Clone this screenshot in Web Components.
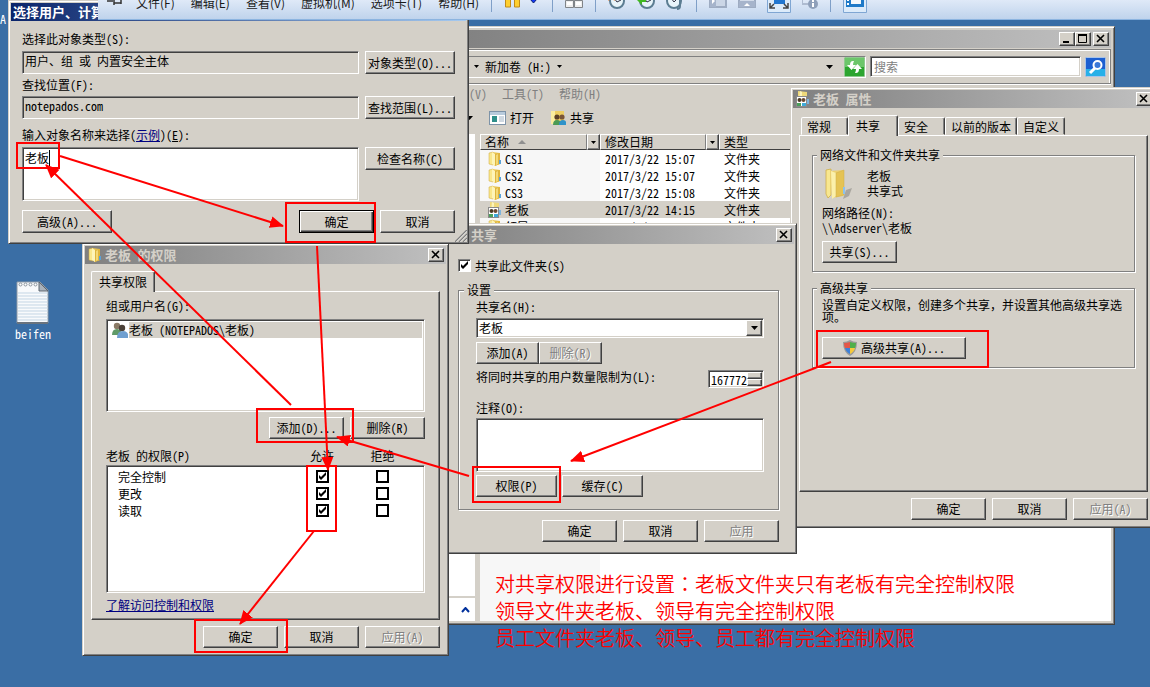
<!DOCTYPE html>
<html lang="zh-CN">
<head>
<meta charset="utf-8">
<title>共享权限设置</title>
<style>
html, body { margin: 0; height: 100%; }
body { font: 12px/14px "Noto Sans Mono CJK SC", "Liberation Mono", "Noto Sans CJK SC", monospace; color: #000; background: #3a6ea5; overflow: hidden; }
</style>
</head>
<body>
<lab-desktop></lab-desktop>
<script>
const base = `
*, *::before, *::after { box-sizing: border-box; }
:host { display: block; box-sizing: border-box; }
[hidden] { display: none !important; }
p, h2 { margin: 0; }
input, textarea, select, button { font: inherit; color: inherit; margin: 0; border-radius: 0; outline: 0; }
.sunken { border: 1px solid; border-color: #808080 #fff #fff #808080; box-shadow: inset 1px 1px #404040, inset -1px -1px #d4d0c8; background: #fff; padding: 2px; display: block; width: 100%; resize: none; overflow: hidden; }
.raised { border: 1px solid; border-color: #fff #404040 #404040 #fff; box-shadow: inset -1px -1px #808080; background: #d4d0c8; }
.actions { display: flex; justify-content: flex-end; gap: 6px; }
.actions win-button { width: 75px; }
a { color: #000080; }
input[type=checkbox] { appearance: none; width: 13px; height: 13px; flex: none; background: #fff no-repeat center; }
input[type=checkbox]:checked { background-image: url("data:image/svg+xml,%3Csvg xmlns='http://www.w3.org/2000/svg' width='9' height='9'%3E%3Cpath d='M1 3v3l2 2 5-5V0L3 5z'/%3E%3C/svg%3E"); }
`;
function define(name, css, html, ready) {
  const t = document.createElement('template');
  t.innerHTML = `<style>${base}${css}</style>${html}`;
  customElements.define(name, class extends HTMLElement {
    connectedCallback() {
      if (this.shadowRoot) return;
      this.attachShadow({ mode: 'open' }).append(t.content.cloneNode(true));
      if (ready) ready(this, this.shadowRoot);
    }
  });
}

/* ---- icons ---- */
const icons = {
  folder: [16, 16, `<path d="M2 2l4-1v13l-4-1z" fill="#f9e78c" stroke="#cda63a" stroke-width=".5"/><path d="M5 1l8 1v11l-6 2z" fill="#e9c552"/><path d="M5 1l3 2v12l-3-2z" fill="#fdf4b8"/><path d="M8 3l5-1v11l-5 2z" fill="#dfb53e"/><path d="M9 4l2-1v10l-2 1z" fill="#f3d976"/><path d="M12 9h2v4h-2z" fill="#5aa2d8"/>`],
  shared: [16, 16, `<path d="M3 0l9 1v12H3z" fill="#efd97a"/><path d="M5 0l2 1v8H4z" fill="#fdf4b8"/><path d="M12 8h2v5h-2z" fill="#7db4dd"/><rect x="1.5" y="5.500" width="10" height="10" fill="#fff" stroke="#8a8a8a"/><circle cx="4.500" cy="9" r="2" fill="#4c3a26"/><circle cx="8.500" cy="9" r="2" fill="#6b4a30"/><path d="M2 15v-3h4v3z" fill="#4ba05a"/><path d="M7 15v-3h4v3z" fill="#3fa9d8"/>`],
  big: [30, 32, `<path d="M20 31l6-3 3-8-6 2z" fill="#000" opacity=".2"/><path d="M3 2l5-1v26l-3 3-2-4z" fill="#f8e78f" stroke="#cfae48" stroke-width=".8"/><path d="M7 3l13-1v26L9 30z" fill="#ecd072"/><path d="M8 3l5 2v23l-4 3z" fill="#fbf0ab"/><path d="M13 5l8-3v25l-8 2z" fill="#e5c353" stroke="#cfae48" stroke-width=".5"/><path d="M20 19h2v7h-2z" fill="#8cc2ee"/>`],
  share: [16, 16, `<path d="M1 1h13v13H1z" fill="#eece62"/><path d="M1 1h4v13H1z" fill="#fbeda0"/><circle cx="7" cy="7" r="2.600" fill="#5a3f28"/><circle cx="12" cy="7" r="2.600" fill="#7a5537"/><path d="M3 15q0-5 4-5t4 5z" fill="#4c9a55"/><path d="M9 15q0-5 4-5t3 5z" fill="#2f93c9"/>`],
  open: [17, 14, `<rect x=".5" y=".5" width="16" height="13" fill="#fff" stroke="#7d93a8"/><path d="M1 1h15v3H1z" fill="#b8cbdc"/><path d="M3 5h5v6H3z" fill="#2f8f8a"/><path d="M10 6h5M10 8h5M10 10h5" stroke="#9fb2c4"/>`],
  users: [16, 16, `<circle cx="5" cy="4" r="3.200" fill="#8a7a66"/><path d="M0 13q0-6 5-6t5 6z" fill="#5f9a68"/><circle cx="10" cy="6" r="3.200" fill="#4a4038"/><path d="M5 16q0-7 6-7t5 7z" fill="#6f9fd0"/>`],
  shield: [14, 16, `<path d="M7 0q3 2 7 2 0 10-7 14Q0 12 0 2q4 0 7-2z" fill="#9a9a9a"/><path d="M7 2v6H2Q1 6 1 3q3 0 6-1z" fill="#e2574a"/><path d="M7 2v6h5q1-2 1-5-3 0-6-1z" fill="#4faf4a"/><path d="M2 8h5v6Q3 12 2 8z" fill="#3d80d8"/><path d="M12 8H7v6q4-2 5-6z" fill="#f5c93c"/>`],
  down: [7, 4, `<path d="M0 0h7L3.500 4z"/>`],
  small: [5, 3, `<path d="M0 0h5L2.500 3z"/>`],
  up: [8, 4, `<path d="M0 4h8L4 0z" fill="#909090"/>`],
  close: [16, 14, `<path d="M4 3l7 7M11 3l-7 7" stroke="#000" stroke-width="1.600"/>`],
  min: [16, 14, `<path d="M4 9h6v2H4z"/>`],
  max: [16, 14, `<path d="M3.500 2.500h8v8h-8z" fill="none" stroke="#000"/><path d="M3 2h9v2H3z"/>`],
  refresh: [21, 20, `<rect x=".5" y=".5" width="20" height="19" rx="1" fill="#2ca52f" stroke="#8fc98f"/><path d="M1 1h19v9H1z" fill="#6cc66a"/><path d="M9 4Q6 4 6 8H3l4.500 5L12 8H9q0-2 1-4zM12 16q3 0 3-4h3l-4.500-5L9 12h3q0 2-1 4z" fill="#fff"/>`],
  search: [21, 20, `<rect x=".5" y=".5" width="20" height="19" rx="1" fill="#1c5fd0" stroke="#a8c4e8"/><path d="M1 12h19v7H1z" fill="#27b0e8"/><circle cx="12.500" cy="8" r="4" fill="#3a78d8" stroke="#fff" stroke-width="2"/><path d="M10 11l-5 5" stroke="#fff" stroke-width="3"/>`],
  grip: [12, 12, `<path d="M0 12L12 0M4 12l8-8M8 12l4-4" stroke="#808080" stroke-width="1.500"/><path d="M1 12L12 1M5 12l7-7M9 12l3-3" stroke="#fff" stroke-width=".5"/>`],
  chevron: [9, 6, `<path d="M1 5l3.500-4L8 5" fill="none" stroke="#00309c" stroke-width="2"/>`],
  notes: [34, 44, `<path d="M1 1h23l8 8v33H1z" fill="#f8fafc" stroke="#8c98a4"/><path d="M1 41h31v2H1z" fill="#69737d"/><path d="M2 12h30M2 15h30M2 18h30M2 21h30M2 24h30M2 27h30M2 30h30M2 33h30M2 36h30M2 39h30" stroke="#c3d5e4"/><path d="M23 1l9 9h-9z" fill="#a9b2bb" stroke="#5d6670"/><g fill="#fff" stroke="#8a949e"><circle cx="4.500" cy="3.500" r="1.500"/><circle cx="9.500" cy="3.500" r="1.500"/><circle cx="14.500" cy="3.500" r="1.500"/><circle cx="19.500" cy="3.500" r="1.500"/></g>`],
  pin: [16, 24, `<path d="M0 12h6M7 7v9M7 9h7v5H7M14 7v8" fill="none" stroke="#333" stroke-width="1.500"/>`],
  pause: [36, 24, `<path d="M1.500 0h5v18h-5zM10.500 0h5v18h-5z" fill="#ffcf2e" stroke="#c08a18"/><path d="M26 10h7l-3.500 4z" fill="#1238f8" stroke="#0b1f6b"/>`],
  keys: [18, 24, `<path d="M5 5h8v6H5zM.5 11.500h8v7h-8zM9.500 11.500h8v7h-8z" fill="#eee" stroke="#808488"/><path d="M2 13h5v3H2zM11 13h5v3h-5z" fill="#fff"/>`],
  clock1: [18, 24, `<circle cx="9" cy="12" r="7" fill="#e8f4fa" stroke="#5c7d92" stroke-width="2"/><path d="M6 9l3 4 4-2" fill="none" stroke="#334"/><path d="M0 11l4-3 3 3" stroke="#f07820" stroke-width="2" fill="none"/>`],
  clock2: [18, 24, `<circle cx="10" cy="12" r="7" fill="#e8f4fa" stroke="#5c7d92" stroke-width="2"/><path d="M7 9l3 4 4-2" fill="none" stroke="#334"/><path d="M0 11l5-4v3h4v3H5v3z" fill="#40b820"/>`],
  clock3: [18, 24, `<circle cx="8" cy="12" r="7" fill="#e8f4fa" stroke="#5c7d92" stroke-width="2"/><path d="M5 9l3 4 3-3" fill="none" stroke="#334"/><path d="M17 9q-3 0-3 3v5q0 3-3 3" fill="none" stroke="#5c7d92" stroke-width="2"/>`],
  side: [18, 24, `<path d="M1 3h16v15H1z" fill="#cbd6e6" stroke="#9eacc2" stroke-width="2"/><path d="M1 3h6v15H1z" fill="#a6b4cb"/><path d="M3 9l3 3-3 3z" fill="#fff"/>`],
  bottom: [18, 24, `<path d="M1 3h16v15H1z" fill="#d3dcea" stroke="#9eacc2" stroke-width="2"/><path d="M1 12h16v6H1z" fill="#a6b4cb"/><path d="M6 17l3-3 3 3z" fill="#fff"/>`],
  full: [24, 24, `<path d="M.5 0v23.500h23V0z" fill="#dcebfa" stroke="#7fa6d3"/><path d="M7 3h11v12H7z" fill="#2176d0"/><path d="M3 14v5h5M21 14v5h-5M3 19l4-4M21 19l-4-4" fill="none" stroke="#444" stroke-width="1.500"/>`],
  info: [16, 24, `<path d="M0 3h10v12H0z" fill="none" stroke="#aebbd0" stroke-width="2"/><circle cx="11" cy="15" r="5" fill="#8fa0ba"/><path d="M11 14v4M11 11v2" stroke="#fff" stroke-width="2"/>`],
  unity: [24, 24, `<path d="M.5 0v23.500h23V0z" fill="#dcebfa" stroke="#7fa6d3"/><path d="M3 3h18v15H3z" fill="#1f7ac8"/><path d="M8 6h10v9H8z" fill="#f4f8fc"/><path d="M4 6h2v2H4zM4 10h2v2H4zM4 14h2v2H4z" fill="#fff"/>`]
};
customElements.define('ui-icon', class extends HTMLElement {
  connectedCallback() {
    if (this.shadowRoot) return;
    const [w, h, body] = icons[this.getAttribute('name')];
    this.attachShadow({ mode: 'open' }).innerHTML =
      `<style>:host{display:inline-block;flex:none;line-height:0}svg{display:block}</style><svg width="${w}" height="${h}" viewBox="0 0 ${w} ${h}" aria-hidden="true">${body}</svg>`;
  }
});

/* ---- basic controls ---- */
define('win-button', `
:host { height: 22px; flex: none; }
button { width: 100%; height: 100%; padding: 0 2px; display: flex; align-items: center; justify-content: center; gap: 4px; white-space: nowrap; }
:host([default]) button { border-color: #000; box-shadow: inset 1px 1px #fff, inset -1px -1px #404040, inset -2px -2px #808080; }
button:disabled { color: #808080; text-shadow: 1px 1px #fff; }
`, `<button type="button" class="raised"><slot></slot></button>`, (el, root) => {
  root.querySelector('button').disabled = el.hasAttribute('disabled');
});

define('win-frame', `
:host { background: #d4d0c8; border: 1px solid; border-color: #d4d0c8 #404040 #404040 #d4d0c8; box-shadow: inset 1px 1px #fff, inset -1px -1px #808080; padding: 2px; position: relative; display: flex; flex-direction: column; }
header { height: 18px; flex: none; display: flex; align-items: center; gap: 2px; padding: 0 2px; background: linear-gradient(90deg, #808080, #c0c0c0); color: #d4d0c8; }
:host([active]) header { background: linear-gradient(90deg, #0a246a, #a6caf0); color: #fff; }
h2 { font-size: 13px; line-height: 18px; font-weight: bold; flex: 1; white-space: nowrap; min-width: 0; }
button { width: 16px; height: 14px; padding: 0; overflow: hidden; line-height: 0; }
button ui-icon { margin: -1px; }
.sizes { display: flex; }
.body { flex: 1; min-height: 0; display: flex; flex-direction: column; }
`, `<header><slot name="icon"></slot><h2></h2><span class="sizes" hidden><button class="raised" aria-label="最小化"><ui-icon name="min"></ui-icon></button><button class="raised" aria-label="最大化"><ui-icon name="max"></ui-icon></button></span><button class="raised shut" aria-label="关闭"><ui-icon name="close"></ui-icon></button></header><div class="body"><slot></slot></div>`, (el, root) => {
  root.querySelector('h2').textContent = el.getAttribute('heading') || '';
  root.querySelector('.sizes').hidden = !el.hasAttribute('sizable');
  root.querySelector('.shut').hidden = el.hasAttribute('active');
});

define('group-box', `
fieldset { margin: 0; min-width: 0; border: 1px solid #808080; box-shadow: 1px 1px #fff, inset 1px 1px #fff; padding: var(--pad, 4px 9px 8px); }
legend { padding: 0 3px; margin-left: -5px; background: #d4d0c8; line-height: 14px; }
:host([wide]) legend { margin-left: -12px; }
`, `<fieldset><legend></legend><slot></slot></fieldset>`, (el, root) => {
  root.querySelector('legend').textContent = el.getAttribute('legend');
});

define('tab-box', `
:host { padding: 7px 6px 5px; display: flex; flex-direction: column; gap: 6px; }
nav { display: flex; align-items: flex-end; height: 20px; position: relative; z-index: 1; }
button { height: 18px; padding: 0 5px; border: 1px solid; border-color: #fff #404040 transparent #fff; box-shadow: inset -1px 0 #808080; border-radius: 2px 2px 0 0; background: #d4d0c8; white-space: nowrap; line-height: 18px; text-align: left; min-width: 47px; }
button[aria-selected=true] { height: 21px; margin-bottom: -1px; border-bottom: 0; min-width: 50px; padding: 0 7px; }
button[aria-selected=false]:first-child { margin-left: 2px; }
.page { border: 1px solid; border-color: #fff #404040 #404040 #fff; box-shadow: inset -1px -1px #808080; padding: var(--page-pad, 12px 12px 6px); min-height: var(--page-height, 0); }
`, `<div><nav role="tablist"></nav><div class="page" role="tabpanel"><slot></slot></div></div><slot name="actions"></slot>`, (el, root) => {
  const nav = root.querySelector('nav');
  el.getAttribute('tabs').split('|').forEach(t => {
    const b = document.createElement('button');
    b.type = 'button';
    b.setAttribute('role', 'tab');
    b.setAttribute('aria-selected', t === el.getAttribute('current'));
    b.textContent = t;
    nav.append(b);
  });
});

/* ---- host machine toolbar ---- */
define('vm-bar', `
:host { height: 34px; background: linear-gradient(#e6eefa 30%, #bfd3ec); border-bottom: 1px solid #8cb4e0; display: flex; align-items: center; gap: 11px; padding-left: 9px; overflow: hidden; font-family: "Noto Sans CJK SC", sans-serif; color: #1a1a1a; }
nav { display: flex; gap: 16px; margin-left: 2px; flex: none; }
button { border: 0; padding: 0; background: none; flex: none; line-height: 16px; }
i { width: 1px; height: 18px; background: #7f9fc8; margin: 0 1px; flex: none; }
`, `<button aria-label="固定"><ui-icon name="pin"></ui-icon></button>
<nav><button>文件(F)</button><button>编辑(E)</button><button>查看(V)</button><button>虚拟机(M)</button><button>选项卡(T)</button><button>帮助(H)</button></nav>
<i></i><button aria-label="暂停"><ui-icon name="pause"></ui-icon></button><i></i>
<button aria-label="发送按键"><ui-icon name="keys"></ui-icon></button><i></i>
<button aria-label="拍摄快照"><ui-icon name="clock1"></ui-icon></button><button aria-label="恢复快照"><ui-icon name="clock2"></ui-icon></button><button aria-label="管理快照"><ui-icon name="clock3"></ui-icon></button><i></i>
<button aria-label="侧栏"><ui-icon name="side"></ui-icon></button><button aria-label="缩略图栏"><ui-icon name="bottom"></ui-icon></button><button aria-label="全屏"><ui-icon name="full"></ui-icon></button><button aria-label="信息"><ui-icon name="info"></ui-icon></button><i></i>
<button aria-label="控制台视图"><ui-icon name="unity"></ui-icon></button>`);

/* ---- file explorer ---- */
const files = [['folder', 'CS1', '2017/3/22 15:07'], ['folder', 'CS2', '2017/3/22 15:07'], ['folder', 'CS3', '2017/3/22 15:08'], ['shared', '老板', '2017/3/22 14:15'], ['folder', '领导', '2017/3/22 14:15']];
define('explorer-window', `
win-frame { height: 100%; padding: 3px; }
.rebar { margin-top: 1px; border: 1px solid #808080; border-left: 0; box-shadow: inset -1px 1px #fff, 0 1px #fff; height: 35px; display: flex; align-items: center; gap: 4px; padding: 0 4px 0 0; flex: none; }
.address { flex: 1; display: flex; align-items: center; gap: 6px; height: 22px; border: 1px solid; border-color: #808080 #fff #fff #808080; padding-left: 29px; }
.address span { flex: 1; display: flex; align-items: center; gap: 6px; }
.address > ui-icon:nth-of-type(2) { margin-right: 5px; }
.icon { border: 0; padding: 0; background: none; line-height: 0; }
input.sunken { width: 211px; height: 21px; padding: 2px 3px; }
input::placeholder { color: #808080; opacity: 1; }
.menu { display: flex; gap: 15px; padding: 3px 0 0 25px; color: #808080; flex: none; }
.menu button, .tools button { border: 0; padding: 0; background: none; }
.tools { display: flex; gap: 16px; height: 33px; align-items: center; padding-left: 22px; flex: none; }
.tools button { display: flex; align-items: center; gap: 4px; }
.panes { flex: 1; min-height: 0; display: grid; grid-template-columns: 31px 1fr; gap: 5px; }
.tree { display: grid; grid-template-rows: 1fr 23px; gap: 2px; }
.tree div { background: #fff; display: flex; align-items: center; justify-content: flex-end; padding-right: 5px; }
.list { background: linear-gradient(90deg, #f7f7f7 120px, #fff 120px); overflow: hidden; }
table { border-collapse: collapse; width: 100%; table-layout: fixed; }
th { padding: 0; font-weight: normal; text-align: left; height: 16px; }
th div { display: flex; height: 16px; }
th span { flex: 1; border: 1px solid; border-color: #fff #808080 #404040 #fff; background: #d4d0c8; padding-left: 4px; display: flex; align-items: center; gap: 9px; }
th button { width: 13px; padding: 0; display: flex; align-items: center; justify-content: center; }
td { padding: 0 0 0 5px; height: 17px; white-space: nowrap; line-height: 16px; }
td div { display: flex; align-items: center; gap: 2px; margin-left: 2px; }
tr.on { background: #d4d0c8; }
`, `<win-frame heading="" sizable>
<div class="rebar"><div class="address"><ui-icon name="small"></ui-icon><span>新加卷 (H:)<ui-icon name="small"></ui-icon></span><ui-icon name="down"></ui-icon><button class="icon" aria-label="刷新"><ui-icon name="refresh"></ui-icon></button></div>
<input class="sunken" type="text" placeholder="搜索" aria-label="搜索"><button class="icon" aria-label="开始搜索"><ui-icon name="search"></ui-icon></button></div>
<div class="menu"><button>(V)</button><button>工具(T)</button><button>帮助(H)</button></div>
<div class="tools"><ui-icon name="down"></ui-icon><button><ui-icon name="open"></ui-icon>打开</button><button><ui-icon name="share"></ui-icon>共享</button></div>
<div class="panes"><div class="tree"><div></div><div><ui-icon name="chevron"></ui-icon></div></div>
<div class="list"><table><colgroup><col style="width:120px"><col style="width:119px"><col></colgroup>
<thead><tr><th><div><span>名称<ui-icon name="up"></ui-icon></span><button class="raised" aria-label="筛选名称"><ui-icon name="small"></ui-icon></button></div></th><th><div><span>修改日期</span><button class="raised" aria-label="筛选日期"><ui-icon name="small"></ui-icon></button></div></th><th><div><span>类型</span></div></th></tr></thead>
<tbody>${files.map(f => `<tr${f[0] === 'shared' ? ' class="on"' : ''}><td><div><ui-icon name="${f[0]}"></ui-icon>${f[1]}</div></td><td>${f[2]}</td><td>文件夹</td></tr>`).join('')}</tbody></table></div></div>
</win-frame>`);

/* ---- 老板 属性 ---- */
define('properties-dialog', `
tab-box { --page-height: 357px; }
group-box + group-box { margin-top: 9px; }
group-box:first-of-type { --pad: 6px 9px 8px; }
.item { display: flex; gap: 14px; line-height: 15px; padding-left: 1px; margin-bottom: 5px; }
.path { line-height: 15px; margin-bottom: 6px; }
.note { line-height: 12px; margin-bottom: 14px; }
.share { width: 75px; }
.advanced { width: 144px; }
`, `<win-frame heading="老板 属性"><ui-icon slot="icon" name="shared"></ui-icon>
<tab-box tabs="常规|共享|安全|以前的版本|自定义" current="共享">
<group-box legend="网络文件和文件夹共享"><div class="item"><ui-icon name="big"></ui-icon><p>老板<br>共享式</p></div><p class="path">网络路径(N):<br>\\\\Adserver\\老板</p><win-button class="share">共享(S)...</win-button></group-box>
<group-box legend="高级共享"><p class="note">设置自定义权限，创建多个共享，并设置其他高级共享选项。</p><win-button class="advanced"><ui-icon name="shield"></ui-icon>高级共享(A)...</win-button></group-box>
<div class="actions" slot="actions"><win-button>确定</win-button><win-button>取消</win-button><win-button disabled>应用(A)</win-button></div>
</tab-box></win-frame>`);

/* ---- 高级共享 ---- */
define('sharing-dialog', `
form { padding: 14px 15px 9px 12px; display: flex; flex-direction: column; }
.check { display: flex; align-items: center; gap: 4px; height: 15px; margin-bottom: 10px; }
.check input { border: 1px solid; border-color: #808080 #fff #fff #808080; box-shadow: inset 1px 1px #404040; }
group-box { --pad: 3px 14px 12px 17px; margin-bottom: 10px; }
label { display: block; }
.combo { position: relative; margin: 4px 0; }
select.sunken { appearance: none; height: 20px; }
.combo .raised { position: absolute; right: 2px; top: 2px; width: 16px; height: 16px; display: flex; align-items: center; justify-content: center; pointer-events: none; }
.pair { display: flex; }
.pair win-button { width: 63px; }
.limit { display: flex; justify-content: space-between; margin: 6px 0 13px; }
.spin { position: relative; width: 56px; height: 18px; }
.spin .sunken { height: 18px; }
.spin span { position: absolute; right: 2px; top: 2px; width: 15px; display: grid; }
.spin button { height: 7px; padding: 0; }
textarea.sunken { height: 54px; margin: 3px 0; }
.wide { gap: 5px; }
.wide win-button { width: 81px; }
.gap { width: 21px; }
`, `<win-frame heading="共享"><span slot="icon" class="gap"></span>
<form><label class="check"><input type="checkbox" checked>共享此文件夹(S)</label>
<group-box wide legend="设置"><label for="name">共享名(H):</label>
<div class="combo"><select id="name" class="sunken"><option>老板</option></select><span class="raised"><ui-icon name="down"></ui-icon></span></div>
<div class="pair"><win-button>添加(A)</win-button><win-button disabled>删除(R)</win-button></div>
<div class="limit"><label for="max">将同时共享的用户数量限制为(L):</label><div class="spin"><input id="max" class="sunken" type="text" value="167772"><span><button type="button" class="raised" aria-label="增加"></button><button type="button" class="raised" aria-label="减少"></button></span></div></div>
<label for="memo">注释(O):</label><textarea id="memo" class="sunken"></textarea>
<div class="pair wide"><win-button>权限(P)</win-button><win-button>缓存(C)</win-button></div></group-box>
<div class="actions"><win-button>确定</win-button><win-button>取消</win-button><win-button disabled>应用</win-button></div></form>
</win-frame>`);

/* ---- 老板 的权限 ---- */
const rights = [['完全控制', true], ['更改', true], ['读取', true]];
define('permissions-dialog', `
tab-box { --page-pad: 7px 14px 6px; }
.users { height: 93px; margin: 6px 0 5px; padding: 2px; }
.users div { display: flex; align-items: center; height: 16px; background: linear-gradient(90deg, #fff 20px, #d4d0c8 20px); padding-left: 3px; gap: 1px; }
th, td { padding: 0; font-weight: normal; text-align: center; }
th { height: 14px; }
th:first-child { text-align: left; }
td { height: 17px; }
td:first-child { text-align: left; padding-left: 12px; }
th:last-child, td:last-child { padding-right: 12px; }
td input[type=checkbox] { border: 2px solid #000; display: block; margin: 0 auto; }
thead::after { content: ""; display: block; height: 5px; }
.link { display: block; margin-top: 5px; margin-bottom: 1px; width: max-content; }
.box { margin-top: 10px; display: grid; }
.box .sunken, .box table { grid-area: 1 / 1; }
.box .sunken { margin-top: 16px; height: 128px; }
.box table { width: 100%; border-collapse: collapse; table-layout: fixed; align-self: start; position: relative; }
`, `<win-frame heading="老板 的权限"><ui-icon slot="icon" name="folder"></ui-icon>
<tab-box tabs="共享权限" current="共享权限"><p>组或用户名(G):</p>
<div class="users sunken"><div><ui-icon name="users"></ui-icon>老板 (NOTEPADOS\\老板)</div></div>
<div class="actions"><win-button>添加(D)...</win-button><win-button>删除(R)</win-button></div>
<div class="box"><div class="sunken"></div><table><colgroup><col><col style="width:60px"><col style="width:73px"></colgroup><thead><tr><th>老板 的权限(P)</th><th>允许</th><th>拒绝</th></tr></thead>
<tbody>${rights.map(r => `<tr><td>${r[0]}</td><td><input type="checkbox" checked aria-label="允许${r[0]}"></td><td><input type="checkbox" aria-label="拒绝${r[0]}"></td></tr>`).join('')}</tbody></table></div>
<a class="link" href="#">了解访问控制和权限</a>
<div class="actions" slot="actions"><win-button>确定</win-button><win-button>取消</win-button><win-button disabled>应用(A)</win-button></div>
</tab-box></win-frame>`);

/* ---- 选择用户、计算机 ---- */
define('select-dialog', `
form { display: grid; grid-template-columns: 1fr 90px; column-gap: 6px; padding: 11px 11px 8px; }
label, .caption { grid-column: 1 / -1; }
.caption { margin: 9px 0 5px; }
label[for=place] { margin: 4px 0; }
label[for=kind] { margin-bottom: 5px; }
input.sunken { background: #d4d0c8; height: 23px; padding: 0 2px 4px; }
textarea.sunken { height: 54px; padding: 3px 2px; line-height: 14px; }
.entry { position: relative; }
.entry i { position: absolute; left: 27px; top: 3px; width: 1px; height: 16px; background: #000; }
win-button { height: 23px; }
.actions { grid-column: 1 / -1; margin-top: 9px; }
.actions win-button:first-child { width: 90px; margin-right: auto; }
.caption label { display: inline; }
.grip { position: absolute; right: 1px; bottom: 1px; }
`, `<win-frame active heading="选择用户、计算">
<form><label for="kind">选择此对象类型(S):</label><input id="kind" class="sunken" value="用户、组 或 内置安全主体" readonly><win-button>对象类型(O)...</win-button>
<label for="place">查找位置(F):</label><input id="place" class="sunken" value="notepados.com" readonly><win-button>查找范围(L)...</win-button>
<div class="caption"><label for="names">输入对象名称来选择</label>(<a href="#">示例</a>)(<u>E</u>):</div><div class="entry"><textarea id="names" class="sunken">老板</textarea><i></i></div><win-button>检查名称(C)</win-button>
<div class="actions"><win-button>高级(A)...</win-button><win-button default>确定</win-button><win-button>取消</win-button></div></form>
<ui-icon class="grip" name="grip"></ui-icon></win-frame>`);

/* ---- red marks and notes over the windows ---- */
define('red-marks', `
:host { color: #f00; pointer-events: none; }
svg { position: absolute; inset: 0; width: 100%; height: 100%; overflow: visible; }
p { position: absolute; left: 495px; top: 570px; font: 350 20px/27px "Noto Sans CJK SC", sans-serif; white-space: nowrap; }
.colon { font-family: "Noto Sans CJK TC", sans-serif; }
`, `<svg fill="none" stroke="#f00" stroke-width="2">
<defs><marker id="tip" markerUnits="userSpaceOnUse" markerWidth="16" markerHeight="14" refX="13" refY="6" orient="auto"><path d="M0 0l14 6-14 6z" fill="#f00" stroke="none"/></marker></defs>
<path d="M17 143h42v25H17zM286 203h89v39h-89zM257 409h96v33h-96zM307 466h29v65h-29zM195 620h92v32h-92zM473 467h87v35h-87zM817 331h171v36H817z"/>
<g><path d="M60 156L283 226" marker-end="url(#tip)"/><path d="M291 405L46 165" marker-end="url(#tip)"/><path d="M317 246L328 470" marker-end="url(#tip)"/><path d="M469 476L337 437" marker-end="url(#tip)"/><path d="M314 531L240 624" marker-end="url(#tip)"/><path d="M831 362L571 461" marker-end="url(#tip)"/></g></svg>
<p>对共享权限进行设置<span class="colon" lang="zh-TW">：</span>老板文件夹只有老板有完全控制权限<br>领导文件夹老板、领导有完全控制权限<br>员工文件夹老板、领导、员工都有完全控制权限</p>`);

/* windows, icons and marks placed freely on the desktop */
define('lab-desktop', `
:host { position: relative; min-height: 100vh; overflow: hidden; background: #3a6ea5; }
:host > * { position: absolute; }
.icon, .edge, explorer-window, properties-dialog, sharing-dialog, permissions-dialog, select-dialog, vm-bar, red-marks { position: absolute; }
.icon { left: 0; top: 281px; width: 66px; color: #fff; display: flex; flex-direction: column; align-items: center; gap: 2px; }
.edge { left: 0; top: 12px; color: #fff; }
explorer-window { left: 440px; top: 26px; width: 675px; height: 599px; }
properties-dialog { left: 790px; top: 87px; width: 367px; }
sharing-dialog { left: 443px; top: 223px; width: 354px; }
permissions-dialog { left: 82px; top: 243px; width: 367px; }
select-dialog { left: 8px; top: 0; width: 461px; }
vm-bar { left: 98px; right: 0; top: -14px; }
red-marks { inset: 0; }
`, `<span class="edge">A</span><div class="icon"><ui-icon name="notes"></ui-icon>beifen</div>
<explorer-window></explorer-window><properties-dialog></properties-dialog><sharing-dialog></sharing-dialog><permissions-dialog></permissions-dialog><select-dialog></select-dialog><vm-bar></vm-bar><red-marks></red-marks>`);
</script>
</body>
</html>
